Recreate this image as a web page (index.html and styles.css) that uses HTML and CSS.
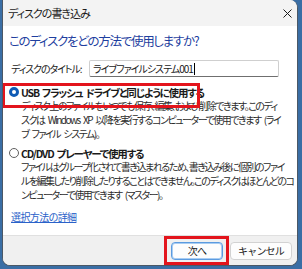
FILE: index.html
```html
<!DOCTYPE html>
<html lang="ja">
<head>
    <meta charset="UTF-8">
    <title>ディスクの書き込み</title>
    <link rel="stylesheet" href="styles.css">
</head>
<body>
    <div class="window">
        <!-- Title bar -->
        <div class="titlebar">
            <span class="title">ディスクの書き込み</span>
            <svg class="close" width="9" height="9" viewBox="0 0 9 9">
                <path d="M0.5 0.5 L8.5 8.5 M8.5 0.5 L0.5 8.5" stroke="#1a1a1a" stroke-width="1" fill="none"/>
            </svg>
        </div>

        <!-- Content -->
        <div class="content">
            <h1>このディスクをどの方法で使用しますか?</h1>

            <div class="title-row">
                <label for="discTitle">ディスクのタイトル:</label>
                <div class="input">ライブファイルシステム001<span class="caret"></span></div>
            </div>

            <div class="option">
                <div class="option-head marked">
                    <span class="radio on"></span>
                    <span class="option-label">USB フラッシュ ドライブと同じように使用する</span>
                </div>
                <p class="desc">ディスク上のファイルをいつでも保存、編集、および削除できます。このディ<br>スクは Windows XP 以降を実行するコンピューターで使用できます (ライ<br>ブ ファイル システム)。</p>
            </div>

            <div class="option second">
                <div class="option-head">
                    <span class="radio"></span>
                    <span class="option-label">CD/DVD プレーヤーで使用する</span>
                </div>
                <p class="desc">ファイルはグループ化されて書き込まれるため、書き込み後に個別のファイ<br>ルを編集したり削除したりすることはできません。このディスクはほとんどのコ<br>ンピューターで使用できます (マスター)。</p>
            </div>

            <a class="link" href="#">選択方法の詳細</a>
        </div>

        <!-- Footer -->
        <div class="footer">
            <div class="marked-btn">
                <button class="btn default">次へ</button>
            </div>
            <button class="btn cancel">キャンセル</button>
        </div>
    </div>
</body>
</html>
```

FILE: styles.css
```css
* {
    margin: 0;
    padding: 0;
    box-sizing: border-box;
}

body {
    width: 302px;
    height: 269px;
    overflow: hidden;
    background-color: #3a6ea5;
    font-family: "Noto Sans CJK JP", "Noto Sans", sans-serif;
    font-feature-settings: "palt" 1;
    color: #1a1a1a;
}

/* Window */
.window {
    margin-left: 2px;
    width: 296px;
    height: 266px;
    background-color: #ffffff;
    border: 1px solid #4b5866;
    border-top: none;
    border-radius: 0 8px 8px 8px;
    overflow: hidden;
    display: flex;
    flex-direction: column;
}

.titlebar {
    height: 26px;
    flex-shrink: 0;
    background-color: #f3f3f3;
    display: flex;
    align-items: center;
    justify-content: space-between;
    padding: 0 5px 0 5px;
}

.title {
    font-size: 11px;
    letter-spacing: -1px;
}

/* Content */
.content {
    flex: 1;
    padding: 4px 0 0 6px;
}

h1 {
    font-size: 12.5px;
    font-weight: normal;
    color: #1f3f9f;
    letter-spacing: -1.3px;
    line-height: 22px;
    margin-bottom: 8px;
}

.title-row {
    display: flex;
    align-items: center;
    height: 17px;
    margin-left: 2px;
}

label {
    font-size: 10px;
    width: 78px;
    letter-spacing: -1.1px;
    white-space: nowrap;
}

.input {
    width: 190px;
    height: 17px;
    border: 1px solid #cfcfcf;
    border-bottom-color: #6f6f6f;
    border-radius: 2px;
    font-size: 10px;
    padding-left: 3px;
    letter-spacing: -1px;
    display: flex;
    align-items: center;
    white-space: nowrap;
}

.caret {
    width: 1px;
    height: 12px;
    background-color: #000000;
    margin-left: 1px;
}

/* Options */
.option {
    margin-top: 8px;
}

.option.second {
    margin-top: 5px;
}

.option-head {
    position: relative;
    display: flex;
    align-items: center;
    gap: 2px;
    height: 14px;
}

/* red mark drawn over the selected option */
.option-head.marked::after {
    content: "";
    position: absolute;
    left: -7px;
    top: -2px;
    width: 192px;
    height: 19px;
    border: 3px solid #e3141c;
}

.radio {
    width: 10px;
    height: 10px;
    border-radius: 50%;
    border: 1px solid #5f5f5f;
    background-color: #ffffff;
}

.radio.on {
    border: 3px solid #0f5bb5;
}

.option-label {
    font-size: 10.5px;
    font-weight: bold;
    letter-spacing: -1.2px;
    word-spacing: 2px;
    white-space: nowrap;
}

.desc {
    font-size: 10px;
    line-height: 14px;
    color: #2b2b2b;
    padding-left: 12px;
    white-space: nowrap;
    letter-spacing: -1.5px;
    word-spacing: 2.5px;
}

.link {
    display: inline-block;
    margin-top: 8px;
    margin-left: 2px;
    font-size: 10px;
    line-height: 14px;
    color: #2a62c9;
    letter-spacing: -0.6px;
}

/* Footer */
.footer {
    height: 30px;
    flex-shrink: 0;
    background-color: #f0f0f0;
    border-top: 1px solid #e0e0e0;
    display: flex;
    align-items: center;
    justify-content: flex-end;
    gap: 7px;
    padding-right: 5px;
}

.marked-btn {
    position: relative;
    display: flex;
}

.marked-btn::after {
    content: "";
    position: absolute;
    inset: -6px -6px -5px -7px;
    border: 3px solid #e3141c;
}

.btn {
    width: 52px;
    height: 18px;
    font-family: inherit;
    font-size: 10px;
    letter-spacing: -0.8px;
    background-color: #fdfdfd;
    border: 1px solid #d2d2d2;
    border-radius: 4px;
    color: #1a1a1a;
}

.btn.default {
    border: 1px solid #5b9be0;
    box-shadow: inset 0 0 0 1px #a9cdf2;
}

.btn.cancel {
    width: 62px;
}
```
